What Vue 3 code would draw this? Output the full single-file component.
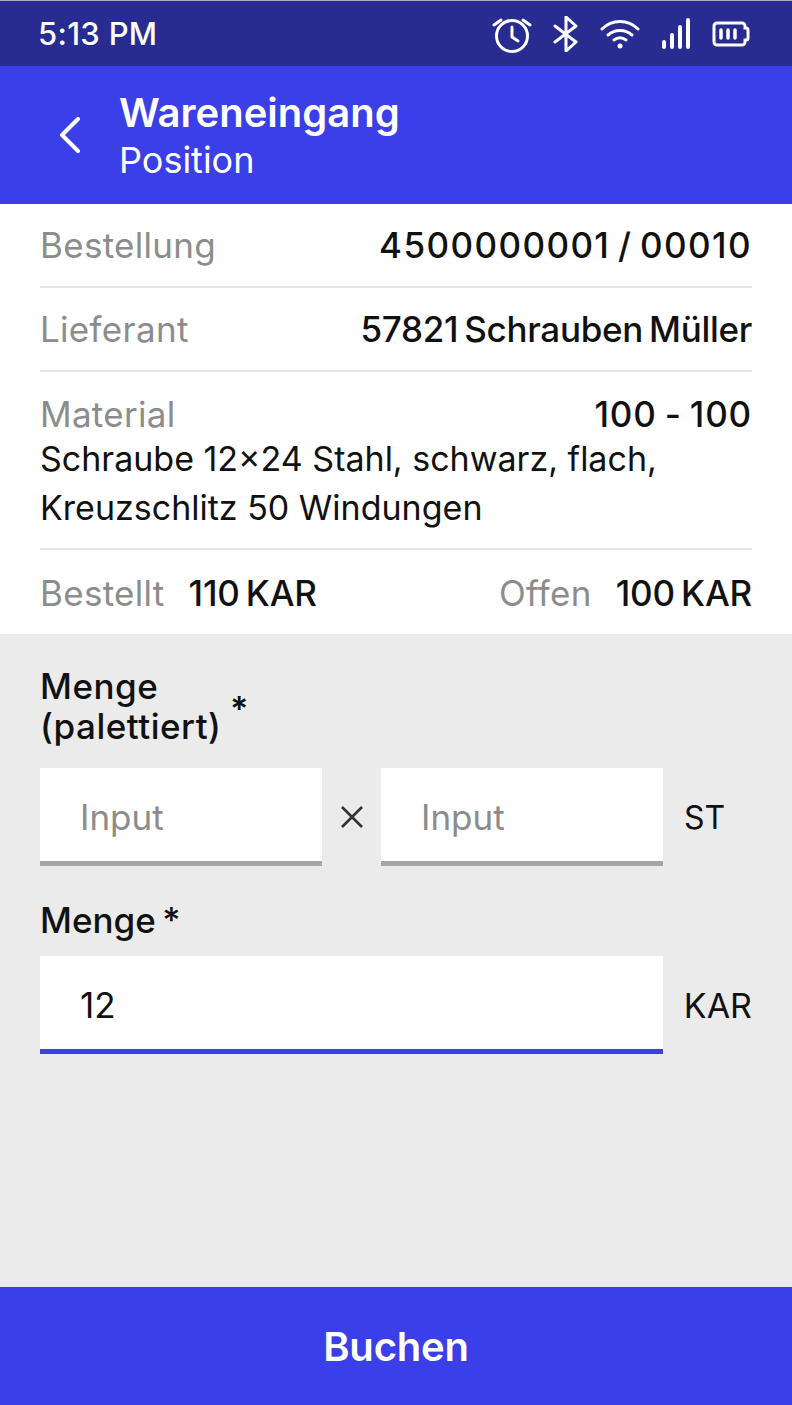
<template>
  <div class="screen">
    <div class="status-bar">
      <span class="time">5:13 PM</span>
      <div class="status-icons">
        <svg width="40" height="38" viewBox="0 0 40 38" fill="none" stroke="#fff" stroke-width="3" stroke-linecap="round" stroke-linejoin="round">
          <circle cx="20" cy="21" r="15.5" />
          <path d="M20 12v10l6 4" />
          <path d="M2 10l7-5M38 10l-7-5" />
        </svg>
        <svg width="26" height="36" viewBox="0 0 26 36" fill="none" stroke="#fff" stroke-width="3" stroke-linecap="round" stroke-linejoin="round">
          <path d="M2 10l21 16-10 9V1l10 9L2 26" />
        </svg>
        <svg width="40" height="30" viewBox="0 0 40 30" fill="none" stroke="#fff" stroke-width="3" stroke-linecap="round">
          <path d="M2 10C12 0 28 0 38 10" />
          <path d="M8 16c7-6 17-6 24 0" />
          <path d="M14 21c4-3 8-3 12 0" />
          <circle cx="20" cy="27" r="2.5" fill="#fff" stroke="none" />
        </svg>
        <svg width="30" height="32" viewBox="0 0 30 32" fill="none" stroke="#fff" stroke-width="4" stroke-linecap="round">
          <path d="M3 24v5M11 17v12M19 9v20M27 2v27" />
        </svg>
        <svg width="38" height="26" viewBox="0 0 38 26" fill="none" stroke="#fff" stroke-linecap="round">
          <path d="M5 2h25a3 3 0 0 1 3 3v2h1a2 2 0 0 1 2 2v8a2 2 0 0 1-2 2h-1v2a3 3 0 0 1-3 3H5a3 3 0 0 1-3-3V5a3 3 0 0 1 3-3z" stroke-width="3" />
          <path d="M9 9v8M16 9v8M23 9v8" stroke-width="3.5" />
        </svg>
      </div>
    </div>

    <header class="app-bar">
      <button class="back">
        <svg width="24" height="36" viewBox="0 0 24 36" fill="none" stroke="#fff" stroke-width="4" stroke-linecap="round" stroke-linejoin="round">
          <path d="M20 2L4 18l16 16" />
        </svg>
      </button>
      <div class="titles">
        <div class="title">Wareneingang</div>
        <div class="subtitle">Position</div>
      </div>
    </header>

    <section class="details">
      <div class="row">
        <span class="key">Bestellung</span>
        <span class="value number">4500000001 / 00010</span>
      </div>
      <div class="row">
        <span class="key">Lieferant</span>
        <span class="value supplier">57821 Schrauben Müller</span>
      </div>
      <div class="row material">
        <div class="material-head">
          <span class="key">Material</span>
          <span class="value range">100 - 100</span>
        </div>
        <p class="material-text">Schraube 12x24 Stahl, schwarz, flach, Kreuzschlitz 50 Windungen</p>
      </div>
      <div class="row last">
        <div class="pair">
          <span class="key">Bestellt</span>
          <span class="value">110 KAR</span>
        </div>
        <div class="pair">
          <span class="key">Offen</span>
          <span class="value">100 KAR</span>
        </div>
      </div>
    </section>

    <section class="form">
      <div class="label-wrap">
        <label class="field-label narrow">Menge (palettiert)</label>
        <span class="star">*</span>
      </div>
      <div class="field-row">
        <div class="input">Input</div>
        <svg class="times" width="24" height="24" viewBox="0 0 24 24" fill="none" stroke="#333" stroke-width="2.6">
          <path d="M2 2l20 20M22 2L2 22" />
        </svg>
        <div class="input">Input</div>
        <span class="unit left">ST</span>
      </div>

      <label class="field-label single">Menge *</label>
      <div class="field-row">
        <div class="input active">12</div>
        <span class="unit">KAR</span>
      </div>
    </section>

    <button class="book">Buchen</button>
  </div>
</template>

<script setup>
</script>

<style>
html, body {
  margin: 0;
  background: #fff;
}
</style>

<style scoped>
.screen {
  width: 792px;
  height: 1405px;
  display: flex;
  flex-direction: column;
  font-family: Inter, "Noto Sans", sans-serif;
  font-size: 34px;
  color: #111;
  overflow: hidden;
}

.status-bar {
  height: 65px;
  border-top: 1px solid #a9a9c9;
  background: #282b90;
  color: #fff;
  display: flex;
  align-items: center;
  justify-content: space-between;
  padding: 0 42px 0 38px;
}

.time {
  font-size: 31px;
  font-weight: 500;
  letter-spacing: 0.3px;
}

.status-icons {
  display: flex;
  align-items: center;
  gap: 21px;
}

.app-bar {
  height: 138px;
  background: #3a3fe8;
  color: #fff;
  display: flex;
  align-items: center;
}

.back {
  background: none;
  border: none;
  padding: 0;
  margin: 0 37px 0 58px;
  display: flex;
}

.title {
  font-size: 40px;
  font-weight: 600;
  line-height: 48px;
}

.subtitle {
  font-size: 36px;
  line-height: 44px;
  padding-top: 1px;
}

.details {
  height: 430px;
  padding: 0 40px;
  background: #fff;
}

.row {
  height: 84px;
  display: flex;
  align-items: center;
  justify-content: space-between;
  border-bottom: 2px solid #e4e4e4;
  box-sizing: border-box;
}

.row.material {
  height: 178px;
  flex-direction: column;
  align-items: stretch;
  justify-content: flex-start;
  padding-top: 22px;
}

.row.last {
  border-bottom: none;
  height: 86px;
}

.material-head {
  display: flex;
  justify-content: space-between;
  line-height: 40px;
}

.material-text {
  margin: 0;
  line-height: 49px;
}

.key {
  font-size: 35px;
  letter-spacing: 0.3px;
  color: #8c8c8c;
}

.value {
  font-size: 35px;
  font-weight: 500;
  word-spacing: -3px;
  letter-spacing: -0.2px;
}

.value.number {
  letter-spacing: 1.4px;
}

.value.supplier {
  letter-spacing: -0.3px;
}

.value.range {
  letter-spacing: 0.8px;
  word-spacing: -2px;
}

.pair {
  display: flex;
  align-items: baseline;
  gap: 24px;
}

.form {
  flex: 1;
  background: #ebebeb;
  padding: 32px 40px 0;
}

.label-wrap {
  display: flex;
  align-items: flex-start;
  height: 102px;
}

.field-label {
  font-size: 35px;
  font-weight: 500;
  line-height: 40px;
  letter-spacing: 0.5px;
}

.field-label.narrow {
  width: 190px;
}

.field-label.single {
  display: block;
  margin-top: 34px;
  margin-bottom: 16px;
  letter-spacing: 0;
  word-spacing: -3px;
}

.star {
  font-weight: 600;
  margin-top: 23px;
  line-height: 40px;
}

.field-row {
  display: flex;
  align-items: center;
}

.times {
  margin: 0 17.5px;
  flex: none;
}

.input {
  flex: 1;
  height: 98px;
  box-sizing: border-box;
  background: #fff;
  border-bottom: 5px solid #a6a6a6;
  padding: 5px 40px 0;
  display: flex;
  align-items: center;
  font-size: 35px;
  color: #8c8c8c;
}

.input.active {
  border-bottom-color: #3a3fe8;
  color: #111;
}

.unit {
  width: 89px;
  flex: none;
  text-align: right;
}

.unit.left {
  text-align: left;
  font-size: 32px;
  padding-left: 21px;
  box-sizing: border-box;
}

.book {
  height: 118px;
  flex: none;
  border: none;
  background: #3a3fe8;
  color: #fff;
  font-family: inherit;
  font-size: 40px;
  font-weight: 600;
  letter-spacing: -0.2px;
}
</style>
